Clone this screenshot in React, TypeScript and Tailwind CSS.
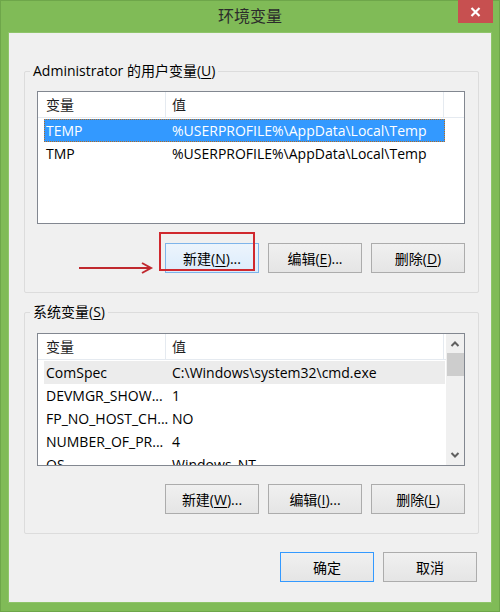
import type { ReactNode } from "react";

const FONT = {
  fontFamily: '"Open Sans", "Noto Sans CJK SC", sans-serif',
};

type Row = { name: string; value: string };

const USER_VARS: Row[] = [
  { name: "TEMP", value: "%USERPROFILE%\\AppData\\Local\\Temp" },
  { name: "TMP", value: "%USERPROFILE%\\AppData\\Local\\Temp" },
];

const SYS_VARS: Row[] = [
  { name: "ComSpec", value: "C:\\Windows\\system32\\cmd.exe" },
  { name: "DEVMGR_SHOW...", value: "1" },
  { name: "FP_NO_HOST_CH...", value: "NO" },
  { name: "NUMBER_OF_PR...", value: "4" },
  { name: "OS", value: "Windows_NT" },
];

function Key({ ch }: { ch: string }) {
  return <span className="underline underline-offset-2">{ch}</span>;
}

function WinButton({
  children,
  variant = "normal",
}: {
  children: ReactNode;
  variant?: "normal" | "hover" | "default";
}) {
  const cls =
    variant === "hover"
      ? "border-[#7eb4ea] bg-gradient-to-b from-[#ecf4fc] to-[#dcecfc]"
      : variant === "default"
        ? "border-[#3399ff] bg-gradient-to-b from-[#f0f0f0] to-[#e5e5e5]"
        : "border-[#acacac] bg-gradient-to-b from-[#f0f0f0] to-[#e5e5e5]";
  return (
    <div
      className={`flex h-[30px] w-[94px] items-center justify-center border text-[14px] text-black ${cls}`}
    >
      {children}
    </div>
  );
}

function VarList({
  rows,
  selected,
  focused,
  scroll,
}: {
  rows: Row[];
  selected: number;
  focused: boolean;
  scroll?: boolean;
}) {
  return (
    <div className="flex h-[133px] w-[428px] overflow-hidden border border-[#828790] bg-white">
      <div className="flex-1 overflow-hidden">
        {/* 헤더 */}
        <div className="flex h-[26px] items-center border-b border-[#e5eaf0] text-[14px] text-[#1e1e1e]">
          <div className="flex h-full w-[128px] items-center border-r border-[#e5eaf0] pl-[8px]">
            变量
          </div>
          <div className="flex h-full w-[278px] items-center border-r border-[#e5eaf0] pl-[6px]">
            值
          </div>
        </div>
        <div className="pt-[1px]">
          {rows.map((r, i) => {
            const isSel = i === selected;
            const selCls = isSel
              ? focused
                ? "bg-[#3399ff] text-white outline-1 outline-dotted outline-[#b36b1f] -outline-offset-1"
                : "bg-[#ececec] text-black"
              : "text-black";
            return (
              <div
                key={r.name}
                className={`ml-[6px] flex h-[23px] w-[401px] items-center text-[14px] ${selCls}`}
              >
                <span className="w-[122px] shrink-0 pl-[2px]">{r.name}</span>
                <span className="pl-[6px]">{r.value}</span>
              </div>
            );
          })}
        </div>
      </div>
      {scroll && (
        <div className="flex w-[18px] flex-col items-center bg-[#f0f0f0]">
          <svg width="10" height="18" viewBox="0 0 10 18" className="mt-[1px]">
            <path d="M1.5 11 L5 7.5 L8.5 11" fill="none" stroke="#606060" strokeWidth="2" />
          </svg>
          <div className="mt-[0px] h-[23px] w-[17px] bg-[#cdcdcd]" />
          <div className="flex-1" />
          <svg width="10" height="18" viewBox="0 0 10 18" className="mb-[1px]">
            <path d="M1.5 7 L5 10.5 L8.5 7" fill="none" stroke="#606060" strokeWidth="2" />
          </svg>
        </div>
      )}
    </div>
  );
}

function GroupBox({
  label,
  children,
}: {
  label: ReactNode;
  children: ReactNode;
}) {
  return (
    <div className="relative ml-[15px] w-[455px] rounded-[2px] border border-[#dcdcdc] pl-[12px] pt-[19px] pb-[19px]">
      <span className="absolute -top-[11px] left-[5px] bg-[#f0f0f0] px-[3px] text-[14px] leading-[20px] text-black">
        {label}
      </span>
      {children}
    </div>
  );
}

export default function App() {
  return (
    <div
      className="flex h-[612px] w-[500px] flex-col border border-[#6ea64a] bg-[#80bb57]"
      style={FONT}
    >
      {/* 타이틀바 */}
      <div className="relative flex h-[31px] shrink-0 items-center justify-center">
        <span className="pb-[2px] text-[16px] text-[#2b2b2b]">环境变量</span>
        <div className="absolute right-[6px] top-[-1px] flex h-[23px] w-[35px] items-center justify-center bg-[#c75050]">
          <svg width="11" height="10" viewBox="0 0 11 10">
            <path d="M1.5 1 L9.5 9 M9.5 1 L1.5 9" stroke="#fff" strokeWidth="2.2" />
          </svg>
        </div>
      </div>

      <div className="relative mx-[7px] mb-[8px] flex flex-1 flex-col border border-[#8fc46a] bg-[#f0f0f0] pt-[38px]">
        <GroupBox
          label={
            <>
              Administrator 的用户变量(<Key ch="U" />)
            </>
          }
        >
          <VarList rows={USER_VARS} selected={0} focused />
          <div className="mt-[19px] flex justify-end gap-[9px] pr-[13px]">
            <div className="relative">
              <WinButton variant="hover">新建(<Key ch="N" />)...</WinButton>
              <div className="pointer-events-none absolute -left-[6px] -top-[11px] h-[39px] w-[96px] border-2 border-[#d0282e]" />
            </div>
            <WinButton>
              编辑(<Key ch="E" />)...
            </WinButton>
            <WinButton>
              删除(<Key ch="D" />)
            </WinButton>
          </div>
        </GroupBox>

        <div className="mt-[19px]">
          <GroupBox
            label={
              <>
                系统变量(<Key ch="S" />)
              </>
            }
          >
            <div className="pt-[1px]">
              <VarList rows={SYS_VARS} selected={0} focused={false} scroll />
            </div>
            <div className="mt-[18px] flex justify-end gap-[9px] pr-[13px]">
              <WinButton>
                新建(<Key ch="W" />)...
              </WinButton>
              <WinButton>
                编辑(<Key ch="I" />)...
              </WinButton>
              <WinButton>
                删除(<Key ch="L" />)
              </WinButton>
            </div>
          </GroupBox>
        </div>

        <div className="mt-[18px] flex justify-end gap-[9px] pr-[14px]">
          <WinButton variant="default">确定</WinButton>
          <WinButton>取消</WinButton>
        </div>

        {/* 빨간 화살표 주석 */}
        <svg
          className="pointer-events-none absolute left-[69px] top-[228px]"
          width="76"
          height="14"
          viewBox="0 0 76 14"
        >
          <path d="M1 7 L72 7" stroke="#c0282e" strokeWidth="2" />
          <path d="M64 2 L73 7 L64 12" fill="none" stroke="#c0282e" strokeWidth="2" />
        </svg>
      </div>
    </div>
  );
}
